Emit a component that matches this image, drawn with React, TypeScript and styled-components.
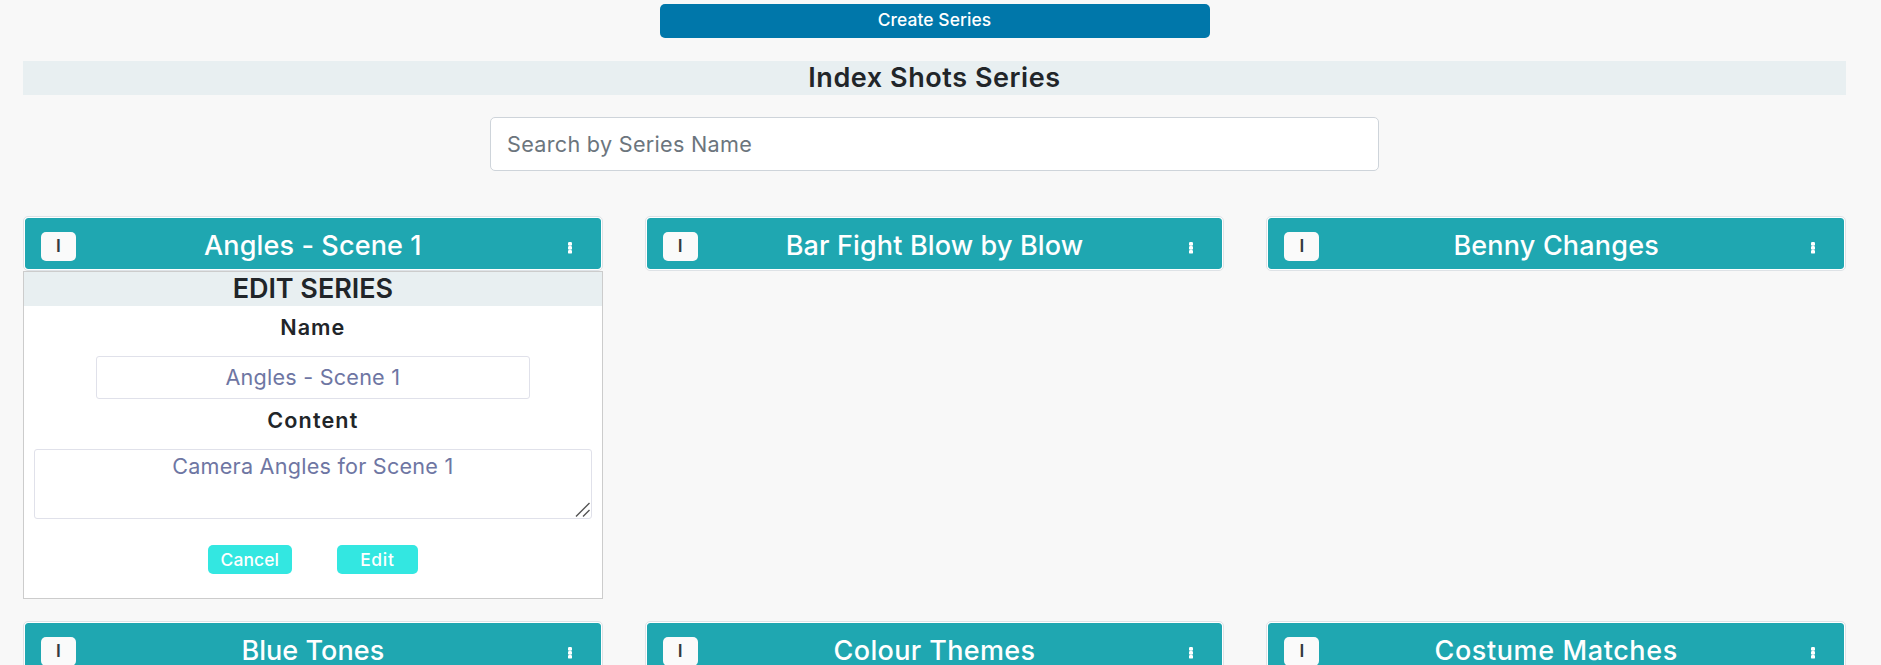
import React from 'react';
import styled, { createGlobalStyle } from 'styled-components';

const GlobalStyle = createGlobalStyle`
  *, *::before, *::after { box-sizing: border-box; }
  html, body { margin: 0; background: #f8f8f8; overflow: hidden; }
  body { font-family: Inter, "Liberation Sans", sans-serif; color: #212529; }
  h2, h3, label { margin: 0; }
  button, input, textarea { font-family: inherit; margin: 0; }
`;

const Page = styled.main`
  display: flex;
  flex-direction: column;
  align-items: center;
  height: 665px;
  padding: 4px 35px 0 23px;
  overflow: hidden;
  & > * { flex: none; }
`;

const CreateButton = styled.button`
  width: 550px;
  height: 34px;
  padding: 0 0 2px;
  border: 0;
  border-radius: 5px;
  background: #0077aa;
  color: #fff;
  font-size: 17.4px;
  font-weight: 500;
  line-height: 26px;
  letter-spacing: 0.1px;
`;

const Banner = styled.h2<{ $spacing: number }>`
  width: 100%;
  height: 34px;
  background: #e8eff1;
  text-align: center;
  font-size: 27px;
  font-weight: 600;
  line-height: 33px;
  letter-spacing: ${p => p.$spacing}px;
`;

const PageBanner = styled(Banner)`
  margin-top: 23px;
`;

const Search = styled.input`
  width: 889px;
  height: 54px;
  margin-top: 22px;
  padding: 0 16px;
  border: 1px solid #ced4da;
  border-radius: 5px;
  background: #fff;
  font-size: 21.6px;
  letter-spacing: 0.3px;
  &::placeholder { color: #6c757d; opacity: 1; }
`;

const Grid = styled.div`
  display: grid;
  grid-template-columns: repeat(3, minmax(0, 1fr));
  gap: 22px 42px;
  align-items: start;
  width: 100%;
  margin-top: 45px;
`;

const CardHeader = styled.div`
  display: grid;
  grid-template-columns: 67px 1fr 67px;
  height: 55px;
  padding: 1px;
  border: 1px solid #dee2e6;
  border-radius: 5px;
  background: #1fa7b1 content-box;
  box-shadow: inset 0 0 0 1px #fff;
  color: #fff;
`;

const Badge = styled.span`
  justify-self: start;
  width: 35px;
  height: 29px;
  margin: 14px 0 0 16px;
  border-radius: 5px;
  background: #fafafa;
  color: #343a40;
  text-align: center;
  font-size: 17.4px;
  font-weight: 600;
  line-height: 28px;
`;

const CardTitle = styled.span<{ $spacing: number }>`
  text-align: center;
  white-space: nowrap;
  font-size: 27px;
  font-weight: 500;
  line-height: 55px;
  letter-spacing: ${p => p.$spacing}px;
`;

const MenuButton = styled.button`
  justify-self: end;
  display: flex;
  width: 4px;
  height: 12px;
  margin: 24px 29px 0 0;
  padding: 0;
  border: 0;
  background: none;
`;

const Panel = styled.form`
  display: flex;
  flex-direction: column;
  align-items: center;
  height: 328px;
  border: 1px solid #ccc;
  background: #fff;
`;

const Label = styled.label<{ $top: number; $spacing: number }>`
  margin-top: ${p => p.$top}px;
  font-size: 21.6px;
  font-weight: 600;
  line-height: 30px;
  letter-spacing: ${p => p.$spacing}px;
`;

const NameInput = styled.input`
  width: 434px;
  height: 43px;
  margin-top: 14px;
  padding: 0 8px 1px;
  border: 1px solid #e0e1ea;
  border-radius: 3px;
  color: #6e76a3;
  text-align: center;
  font-size: 21.6px;
  letter-spacing: 0.23px;
`;

const ContentField = styled.div`
  position: relative;
  width: 558px;
  height: 70px;
  margin-top: 14px;
`;

const ContentInput = styled.textarea`
  display: block;
  width: 100%;
  height: 100%;
  padding: 0 8px;
  border: 1px solid #e0e1ea;
  border-radius: 3px;
  color: #6e76a3;
  text-align: center;
  font-size: 21.6px;
  line-height: 32px;
  letter-spacing: 0.23px;
  resize: none;
`;

const ResizeGrip = styled.svg`
  position: absolute;
  right: 2px;
  bottom: 2px;
  pointer-events: none;
`;

const Actions = styled.div`
  display: flex;
  gap: 45px;
  margin-top: 26px;
`;

const ActionButton = styled.button<{ $width: number; $spacing: number }>`
  width: ${p => p.$width}px;
  height: 29px;
  padding: 0 0 1px;
  border: 0;
  border-radius: 5px;
  background: #33e7e1;
  color: #fff;
  font-size: 17.4px;
  font-weight: 500;
  letter-spacing: ${p => p.$spacing}px;
`;

const series = [
  { name: 'Angles - Scene 1', spacing: 0.13, editing: true },
  { name: 'Bar Fight Blow by Blow', spacing: 0.14 },
  { name: 'Benny Changes', spacing: 0.18 },
  { name: 'Blue Tones', spacing: 0.05 },
  { name: 'Colour Themes', spacing: 0.35 },
  { name: 'Costume Matches', spacing: 0.6 },
];

function EditSeries({ name }: { name: string }) {
  return (
    <Panel>
      <Banner as="h3" $spacing={-0.05}>EDIT SERIES</Banner>
      <Label htmlFor="name" $top={6} $spacing={1}>Name</Label>
      <NameInput id="name" defaultValue={name} />
      <Label htmlFor="content" $top={6} $spacing={1.15}>Content</Label>
      <ContentField>
        <ContentInput id="content" defaultValue="Camera Angles for Scene 1" />
        <ResizeGrip width="15" height="15" viewBox="0 0 15 15" fill="none" stroke="#555" strokeWidth="1.4">
          <path d="M1 14.5 14.5 1M8 14.5l6.5-6.5" />
        </ResizeGrip>
      </ContentField>
      <Actions>
        <ActionButton type="button" $width={84} $spacing={0.15}>Cancel</ActionButton>
        <ActionButton type="button" $width={81} $spacing={0.7}>Edit</ActionButton>
      </Actions>
    </Panel>
  );
}

export default function App() {
  return (
    <>
      <GlobalStyle />
      <Page>
        <CreateButton>Create Series</CreateButton>
        <PageBanner $spacing={0.56}>Index Shots Series</PageBanner>
        <Search placeholder="Search by Series Name" />
        <Grid>
          {series.map(s => (
            <article key={s.name}>
              <CardHeader>
                <Badge>I</Badge>
                <CardTitle $spacing={s.spacing}>{s.name}</CardTitle>
                <MenuButton aria-label="Series menu">
                  <svg width="4" height="12" viewBox="0 0 4 12" fill="#fff">
                    <rect x="0" y="0.1" width="4" height="3.7" rx="1.2" />
                    <rect x="0" y="4" width="4" height="3.7" rx="1.2" />
                    <rect x="0" y="7.9" width="4" height="3.7" rx="1.2" />
                  </svg>
                </MenuButton>
              </CardHeader>
              {s.editing && <EditSeries name={s.name} />}
            </article>
          ))}
        </Grid>
      </Page>
    </>
  );
}
